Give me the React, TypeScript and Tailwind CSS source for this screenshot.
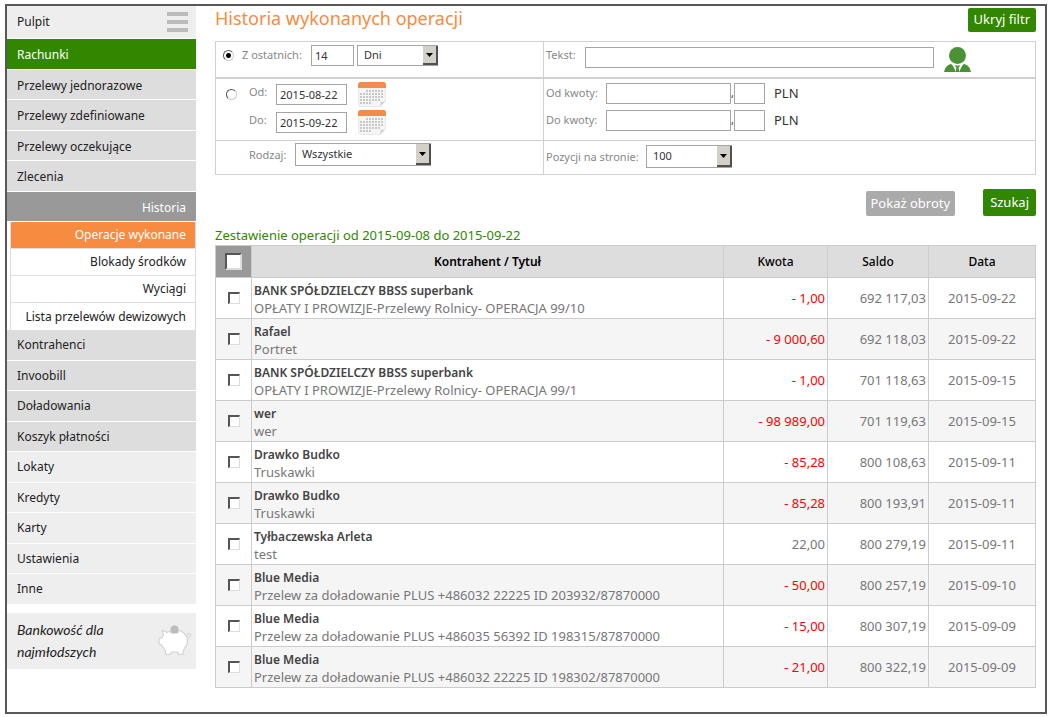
import { useState } from "react";
import type { ReactNode } from "react";
import clsx from "clsx";

type Operation = {
  name: string;
  title: string;
  amount: string;
  balance: string;
  date: string;
};

const accountItems = [
  "Rachunki",
  "Przelewy jednorazowe",
  "Przelewy zdefiniowane",
  "Przelewy oczekujące",
  "Zlecenia",
  "Historia",
];

const historyItems = ["Operacje wykonane", "Blokady środków", "Wyciągi", "Lista przelewów dewizowych"];

const otherItems = [
  "Kontrahenci",
  "Invoobill",
  "Doładowania",
  "Koszyk płatności",
  "Lokaty",
  "Kredyty",
  "Karty",
  "Ustawienia",
  "Inne",
];

const operations: Operation[] = [
  { name: "BANK SPÓŁDZIELCZY BBSS superbank", title: "OPŁATY I PROWIZJE-Przelewy Rolnicy- OPERACJA 99/10", amount: "- 1,00", balance: "692 117,03", date: "2015-09-22" },
  { name: "Rafael", title: "Portret", amount: "- 9 000,60", balance: "692 118,03", date: "2015-09-22" },
  { name: "BANK SPÓŁDZIELCZY BBSS superbank", title: "OPŁATY I PROWIZJE-Przelewy Rolnicy- OPERACJA 99/1", amount: "- 1,00", balance: "701 118,63", date: "2015-09-15" },
  { name: "wer", title: "wer", amount: "- 98 989,00", balance: "701 119,63", date: "2015-09-15" },
  { name: "Drawko Budko", title: "Truskawki", amount: "- 85,28", balance: "800 108,63", date: "2015-09-11" },
  { name: "Drawko Budko", title: "Truskawki", amount: "- 85,28", balance: "800 193,91", date: "2015-09-11" },
  { name: "Tyłbaczewska Arleta", title: "test", amount: "22,00", balance: "800 279,19", date: "2015-09-11" },
  { name: "Blue Media", title: "Przelew za doładowanie PLUS +486032 22225 ID 203932/87870000", amount: "- 50,00", balance: "800 257,19", date: "2015-09-10" },
  { name: "Blue Media", title: "Przelew za doładowanie PLUS +486035 56392 ID 198315/87870000", amount: "- 15,00", balance: "800 307,19", date: "2015-09-09" },
  { name: "Blue Media", title: "Przelew za doładowanie PLUS +486032 22225 ID 198302/87870000", amount: "- 21,00", balance: "800 322,19", date: "2015-09-09" },
];

const fieldClass = "h-[21px] border border-[#a5a5a5] bg-white text-[11px] text-[#333] outline-none";

const CalendarIcon = () => (
  <svg width="28" height="25" viewBox="0 0 28 25" aria-hidden="true">
    <path d="M0.5 5H27.5V19L22 24.5H2.5Q0.5 24.5 0.5 22.5Z" fill="#f5f5f5" stroke="#dedede" strokeWidth="0.6" />
    <path d="M27.5 19L22 24.5Q23.5 21 22.5 19.6Q25 20.6 27.5 19Z" fill="#cfcfcf" />
    <path d="M0 6V2.5Q0 0 2.5 0H25.5Q28 0 28 2.5V6Z" fill="#f08c4c" />
    <path d="M8 9H25M8 12H25M2 15H25M2 18H22M2 21H13M2 12H4M5 12H7" stroke="#c8c8c8" strokeWidth="2" strokeDasharray="2 1" />
  </svg>
);

const PersonIcon = () => (
  <svg width="27" height="25" viewBox="0 0 27 25" fill="#4a9235" aria-hidden="true">
    <circle cx="13.5" cy="8.5" r="8.5" />
    <path d="M0 25Q1 19 6.5 17Q8 17 9 19L12 25Z" />
    <path d="M27 25Q26 19 20.5 17Q19 17 18 19L15 25Z" />
    <path d="M10.5 18.5H16.5L14.6 20.5L15.2 25H11.8L12.4 20.5Z" />
  </svg>
);

const PiggyIcon = () => (
  <svg width="34" height="32" viewBox="0 0 34 32" aria-hidden="true">
    <path
      d="M4 6Q7 5.500 9 7.500Q12 5 17 5Q25 5 28 11Q29.500 12 30 10.500Q29 8.500 31 8.500Q33.500 9.500 32 11.500Q31 13 29 13Q30.500 19 26.500 23Q25 25 25 29.500H20.500L19.500 27H13.500L12.500 29.500H8Q8 26 6.500 24Q4.500 22 3.500 20L1 18.500V14L4 12.500Q5 10.500 5.500 9.500Q5 8 4 6Z"
      fill="#fff"
      stroke="#d3d3d3"
      strokeWidth="1.2"
      strokeLinejoin="round"
    />
    <path d="M11.5 6.500Q16.5 4.500 21.5 6.500L20 8.500H13Z" fill="#d5d5d5" />
    <circle cx="16.500" cy="4.500" r="4" fill="#bdbdbd" />
  </svg>
);

const Select = ({ id, value, width, className }: { id: string; value: string; width: string; className: string }) => (
  <div className={clsx("relative", width)}>
    <select
      id={id}
      className={clsx("block w-full appearance-none border border-[#a5a5a5] bg-white pl-[6px] text-[11px] text-[#333]", className)}
    >
      <option>{value}</option>
    </select>
    <span className="pointer-events-none absolute inset-y-px right-0 flex w-[15px] items-center justify-center border-r-2 border-b-2 border-[#505050] bg-[#d4d0c8]">
      <svg width="7" height="4" viewBox="0 0 7 4" aria-hidden="true">
        <path d="M0 0H7L3.500 4Z" fill="#000" />
      </svg>
    </span>
  </div>
);

const Radio = ({ label, checked, onChange }: { label: string; checked: boolean; onChange: () => void }) => (
  <input
    type="radio"
    name="period"
    aria-label={label}
    checked={checked}
    onChange={onChange}
    className="size-[11px] shrink-0 appearance-none rounded-full border border-t-[#555] border-r-[#ccc] border-b-[#ccc] border-l-[#555] bg-white checked:bg-[radial-gradient(circle,#000_2px,#fff_3px)]"
  />
);

const Checkbox = ({ label, big }: { label: string; big?: boolean }) => (
  <input
    type="checkbox"
    aria-label={label}
    className={clsx(
      "mx-auto block appearance-none border-t-2 border-l-2 border-t-[#555] border-r-[#ddd] border-b-[#ddd] border-l-[#555] bg-white checked:bg-[#318700]",
      big ? "size-[17px] border-r-2 border-b-2" : "size-[12px] border-r border-b"
    )}
  />
);

const NavItem = ({ label, className }: { label: string; className: string }) => (
  <li className="h-[30px] pb-px odd:h-[31px]">
    <a href="#" className={clsx("flex h-full items-center px-[10px]", className)}>
      {label}
    </a>
  </li>
);

const Sidebar = () => (
  <nav className="w-[189px] shrink-0 text-[12px] text-[#222]">
    <div className="mb-px flex h-8 items-center justify-between bg-[#eee] pr-2 pl-[10px]">
      <a href="#">Pulpit</a>
      <button aria-label="Menu" className="flex w-[21px] flex-col gap-1">
        <span className="h-1 bg-[#bbb]" />
        <span className="h-1 bg-[#bbb]" />
        <span className="h-1 bg-[#bbb]" />
      </button>
    </div>
    <ul>
      {accountItems.map((item) => (
        <NavItem
          key={item}
          label={item}
          className={clsx(
            "pt-[2px]",
            item === "Rachunki" && "bg-[#318700] text-white",
            item === "Historia" && "justify-end bg-[#999] text-white",
            item !== "Rachunki" && item !== "Historia" && "bg-[#ddd]"
          )}
        />
      ))}
    </ul>
    <ul className="ml-[3px] border-x border-[#ddd]">
      {historyItems.map((item, i) => (
        <li key={item} className={clsx("h-[27px]", i < historyItems.length - 1 && "border-b border-[#ddd]")}>
          <a
            href="#"
            className={clsx("flex h-full items-center justify-end pr-[9px]", i === 0 && "bg-[#f78b3f] text-white")}
          >
            {item}
          </a>
        </li>
      ))}
    </ul>
    <ul>
      {otherItems.map((item, i) => (
        <NavItem key={item} label={item} className={i < 4 ? "bg-[#ddd]" : "bg-[#eee]"} />
      ))}
    </ul>
    <a href="#" className="mt-2 flex items-center justify-between bg-[#eee] py-[6px] pr-1 pl-[10px]">
      <span className="w-28 [font-family:'Segoe_Print','Lato',cursive] text-[14px] leading-[22px] italic">
        Bankowość dla najmłodszych
      </span>
      <PiggyIcon />
    </a>
  </nav>
);

const FilterCell = ({ children, className }: { children: ReactNode; className?: string }) => (
  <div className={clsx("border-r border-b border-[#d0d0d0]", className)}>{children}</div>
);

const AmountRow = ({ id, label }: { id: string; label: string }) => (
  <div className="flex items-center">
    <label htmlFor={id} className="w-[60px]">
      {label}
    </label>
    <input id={id} className={clsx(fieldClass, "w-[125px] px-1")} />
    <span className="w-[3px] text-[#333]">,</span>
    <input aria-label={`${label} grosze`} className={clsx(fieldClass, "w-[31px] px-1")} />
    <span className="ml-[9px] text-[13px] text-[#333]">PLN</span>
  </div>
);

const DateRow = ({ id, label, value }: { id: string; label: string; value: string }) => (
  <div className="flex items-center">
    <label htmlFor={id} className="w-[27px] pb-1">
      {label}
    </label>
    <input id={id} defaultValue={value} className={clsx(fieldClass, "w-[71px] px-[3px]")} />
    <button type="button" aria-label={`Kalendarz ${label}`} className="ml-[11px]">
      <CalendarIcon />
    </button>
  </div>
);

const Filter = () => {
  const [period, setPeriod] = useState("last");

  return (
    <form className="grid grid-cols-[328px_1fr] border-t border-l border-[#d0d0d0] text-[11px] text-[#888]">
      <FilterCell className="flex h-[37px] items-start border-b-2 pt-[3px] pl-[7px]">
        <div className="flex items-center">
          <Radio label="Z ostatnich" checked={period === "last"} onChange={() => setPeriod("last")} />
          <label htmlFor="days" className="ml-2 w-[69px]">
            Z ostatnich:
          </label>
          <input id="days" defaultValue="14" className={clsx(fieldClass, "mr-[3px] w-[43px] px-[3px]")} />
          <Select id="unit" value="Dni" width="w-[81px]" className="h-[21px]" />
        </div>
      </FilterCell>
      <FilterCell className="flex h-[37px] items-start border-b-2 pt-[5px] pl-[2px]">
        <label htmlFor="text" className="w-[39px]">
          Tekst:
        </label>
        <input id="text" className={clsx(fieldClass, "mr-[10px] min-w-0 flex-1 px-1")} />
        <button type="button" aria-label="Wybierz kontrahenta" className="mr-16">
          <PersonIcon />
        </button>
      </FilterCell>
      <FilterCell className="flex h-[62px] items-start pt-[3px] pl-[10px]">
        <div className="mr-3 flex h-[25px] items-center">
          <Radio label="Zakres dat" checked={period === "range"} onChange={() => setPeriod("range")} />
        </div>
        <div className="flex flex-col gap-[3px]">
          <DateRow id="from" label="Od:" value="2015-08-22" />
          <DateRow id="to" label="Do:" value="2015-09-22" />
        </div>
      </FilterCell>
      <FilterCell className="flex h-[62px] flex-col gap-[6px] pt-1 pl-[2px]">
        <AmountRow id="amount-from" label="Od kwoty:" />
        <AmountRow id="amount-to" label="Do kwoty:" />
      </FilterCell>
      <FilterCell className="flex h-[34px] items-start pt-[2px] pl-[33px]">
        <label htmlFor="kind" className="w-[46px] leading-[23px]">
          Rodzaj:
        </label>
        <Select id="kind" value="Wszystkie" width="w-[136px]" className="h-[23px]" />
      </FilterCell>
      <FilterCell className="flex h-[34px] items-start pt-1 pl-[2px]">
        <label htmlFor="page-size" className="w-[100px] leading-[23px]">
          Pozycji na stronie:
        </label>
        <Select id="page-size" value="100" width="w-[86px]" className="h-[23px]" />
      </FilterCell>
    </form>
  );
};

const OperationsTable = () => (
  <table className="w-full table-fixed border-collapse text-[13px] text-[#777]">
    <caption className="h-[22px] text-left leading-6 text-[#318700]">
      <p className="h-[22px]">Zestawienie operacji od 2015-09-08 do 2015-09-22</p>
    </caption>
    <thead className="bg-[#ddd] text-[12px] text-black">
      <tr className="h-8">
        <th className="w-9 border border-[#ccc] bg-[#999] p-0">
          <Checkbox label="Zaznacz wszystkie" big />
        </th>
        <th className="border border-[#ccc] p-0 font-semibold">Kontrahent / Tytuł</th>
        <th className="w-[104px] border border-[#ccc] p-0 font-medium">Kwota</th>
        <th className="w-[101px] border border-[#ccc] p-0 font-medium">Saldo</th>
        <th className="w-[107px] border border-[#ccc] p-0 font-medium">Data</th>
      </tr>
    </thead>
    <tbody>
      {operations.map(({ name, title, amount, balance, date }, i) => (
        <tr key={i} className="h-[41px] even:bg-[#f5f5f5]">
          <td className="border border-[#ccc] p-0">
            <Checkbox label={`Zaznacz ${name}`} />
          </td>
          <td className="border border-[#ccc] pt-[2px] pr-0 pb-0 pl-[2px]">
            <p className="text-[12px] leading-[17px] font-semibold text-[#444]">{name}</p>
            <p className="leading-[18px]">{title}</p>
          </td>
          <td className={clsx("border border-[#ccc] pt-[2px] pr-[2px] text-right", amount.startsWith("-") && "text-[#f00]")}>
            {amount}
          </td>
          <td className="border border-[#ccc] pt-[2px] pr-[2px] text-right">{balance}</td>
          <td className="border border-[#ccc] pt-[2px] text-center">{date}</td>
        </tr>
      ))}
    </tbody>
  </table>
);

export default function App() {
  return (
    <div className="flex min-h-screen bg-white pt-1 pr-[2px] pb-[3px] pl-[5px] font-['Noto_Sans',sans-serif]">
      <div className="flex flex-1 border-2 border-[#58585a]">
        <Sidebar />
        <main className="min-w-0 flex-1 pr-[9px] pl-[19px]">
          <div className="flex h-[35px] items-start justify-between">
            <h1 className="text-[18px] leading-6 text-[#f78b3f]">Historia wykonanych operacji</h1>
            <button className="mt-[2px] h-6 rounded-xs bg-[#318700] px-[6px] text-[13px] text-white">Ukryj filtr</button>
          </div>
          <Filter />
          <div className="mt-[14px] mb-[7px] flex items-end justify-end gap-7 text-[13px] text-white">
            <button className="h-[25px] rounded-xs bg-[#aaa] px-[5px]">Pokaż obroty</button>
            <button className="h-[27px] rounded-xs bg-[#318700] px-[7px]">Szukaj</button>
          </div>
          <OperationsTable />
        </main>
      </div>
    </div>
  );
}
